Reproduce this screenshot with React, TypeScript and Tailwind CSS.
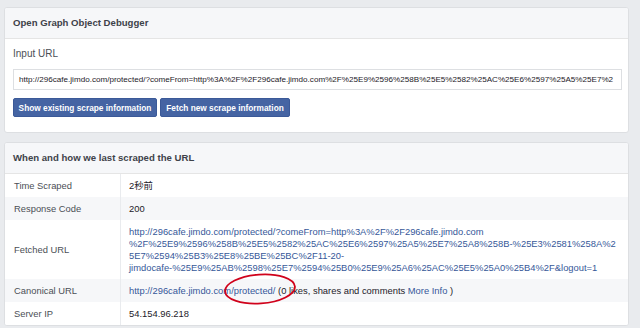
const inputUrl =
  "http://296cafe.jimdo.com/protected/?comeFrom=http%3A%2F%2F296cafe.jimdo.com%2F%25E9%2596%258B%25E5%2582%25AC%25E6%2597%25A5%25E7%2";

const fetchedLines = [
  "http://296cafe.jimdo.com/protected/?comeFrom=http%3A%2F%2F296cafe.jimdo.com",
  "%2F%25E9%2596%258B%25E5%2582%25AC%25E6%2597%25A5%25E7%25A8%258B-%25E3%2581%258A%2",
  "5E7%2594%25B3%25E8%25BE%25BC%2F11-20-",
  "jimdocafe-%25E9%25AB%2598%25E7%2594%25B0%25E9%25A6%25AC%25E5%25A0%25B4%2F&logout=1",
];

function Row({ label, shaded, children }: { label: string; shaded?: boolean; children: React.ReactNode }) {
  return (
    <div className={`flex ${shaded ? "bg-[#f6f7f9]" : "bg-white"}`}>
      <div className="w-[116px] shrink-0 border-r border-[#e9ebee] pl-[9px] py-[5.5px] text-[#4b4f56] flex items-center">
        {label}
      </div>
      <div className="flex-1 pl-[8px] py-[5.5px] text-[#1d2129]">{children}</div>
    </div>
  );
}

export default function App() {
  return (
    <div className="min-h-[328px] w-[640px] bg-[#e9ebee] pt-[7px] pl-[4px] font-['Liberation_Sans',Arial,sans-serif] text-[9.4px] leading-[12px]">
      <div className="w-[625px] bg-white rounded-[3px] border border-[#dddfe2] overflow-hidden">
        <div className="h-[31px] bg-[#f6f7f9] border-b border-[#e5e5e5] pl-[8px] flex items-center font-bold text-[#3e4249] text-[9.6px]">
          Open Graph Object Debugger
        </div>
        <div className="pl-[8px] pr-[6px] pt-[9px] pb-[15px]">
          <div className="text-[#4b4f56] text-[10px] leading-[12px]">Input URL</div>
          <div className="mt-[9px] h-[21px] border border-[#dddfe2] flex items-center pl-[5px] overflow-hidden whitespace-nowrap text-[8.1px] text-[#1d2129]">
            {inputUrl}
          </div>
          <div className="mt-[8px] flex gap-[3px]">
            <button className="h-[19px] w-[144px] bg-[#4564a3] border border-[#3b5998] rounded-[2px] text-white font-bold text-[8.3px] flex items-center justify-center">
              Show existing scrape information
            </button>
            <button className="h-[19px] w-[130px] bg-[#4564a3] border border-[#3b5998] rounded-[2px] text-white font-bold text-[8.3px] flex items-center justify-center">
              Fetch new scrape information
            </button>
          </div>
        </div>
      </div>

      <div className="mt-[9px] w-[625px] bg-white rounded-[3px] border border-[#dddfe2] overflow-hidden relative">
        <div className="h-[31px] bg-[#f6f7f9] border-b border-[#e5e5e5] pl-[8px] flex items-center font-bold text-[#3e4249] text-[9.6px]">
          When and how we last scraped the URL
        </div>
        <Row label="Time Scraped">
          <span className="font-['Liberation_Sans','Noto_Sans_CJK_JP',sans-serif]">2秒前</span>
        </Row>
        <Row label="Response Code" shaded>
          200
        </Row>
        <Row label="Fetched URL">
          <a className="text-[#365899]">
            {fetchedLines.map((l) => (
              <span key={l} className="block">
                {l}
              </span>
            ))}
          </a>
        </Row>
        <Row label="Canonical URL" shaded>
          <a className="text-[#365899]">http://296cafe.jimdo.com/protected/</a> (0 likes, shares and comments{" "}
          <a className="text-[#365899]">More Info</a> )
        </Row>
        <Row label="Server IP">54.154.96.218</Row>
        <svg className="absolute left-[217px] top-[129px]" width="76" height="34" viewBox="0 0 76 34">
          <ellipse cx="38" cy="17" rx="35" ry="14.5" fill="none" stroke="#d0021b" strokeWidth="1.8" transform="rotate(-4 38 17)" />
        </svg>
      </div>
    </div>
  );
}
